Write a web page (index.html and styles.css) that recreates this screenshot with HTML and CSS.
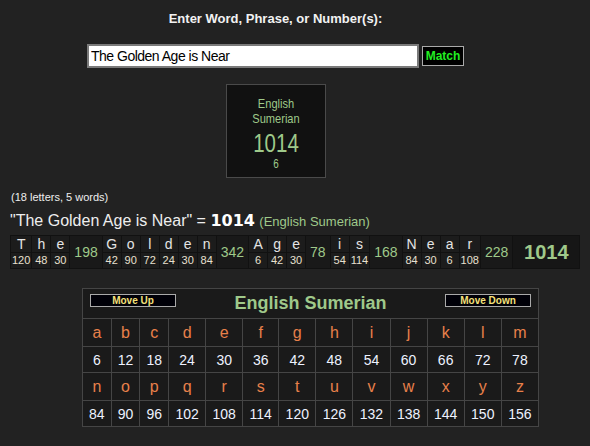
FILE: index.html
```html
<!DOCTYPE html>
<html lang="en">
<head>
    <meta charset="UTF-8">
    <title>Gematria Calculator</title>
    <link rel="stylesheet" href="styles.css">
</head>
<body>
    <div class="top">
        <h1>Enter Word, Phrase, or Number(s):</h1>
        <form class="search" onsubmit="return false">
            <input type="text" id="phrase" value="The Golden Age is Near">
            <button type="submit" class="match">Match</button>
        </form>
        <div class="result-box">
            <div class="cipher-name">English<br>Sumerian</div>
            <div class="cipher-value" id="boxValue">1014</div>
            <div class="cipher-reduced" id="boxReduced">6</div>
        </div>
    </div>

    <p class="counts" id="counts">(18 letters, 5 words)</p>
    <p class="summary">"<span id="phraseText">The Golden Age is Near</span>" = <b id="total">1014</b> <span class="cipher-label">(English Sumerian)</span></p>

    <table class="breakdown">
        <tr id="letterRow"></tr>
        <tr id="valueRow"></tr>
    </table>

    <table class="cipher-grid">
        <tr>
            <td class="grid-head" colspan="13">
                <button class="move">Move Up</button>
                <span class="grid-title">English Sumerian</span>
                <button class="move">Move Down</button>
            </td>
        </tr>
        <tbody id="gridBody"></tbody>
    </table>

    <script>
        const value = ch => (ch.toLowerCase().charCodeAt(0) - 96) * 6;

        function buildBreakdown(phrase) {
            const letterRow = document.getElementById('letterRow');
            const valueRow = document.getElementById('valueRow');
            let total = 0;

            phrase.split(' ').forEach(word => {
                let sum = 0;
                for (const ch of word) {
                    const top = document.createElement('td');
                    top.className = 'ch';
                    top.textContent = ch;
                    letterRow.appendChild(top);

                    const bottom = document.createElement('td');
                    bottom.className = 'val';
                    bottom.textContent = value(ch);
                    valueRow.appendChild(bottom);
                    sum += value(ch);
                }
                const wordSum = document.createElement('td');
                wordSum.className = 'word-sum';
                wordSum.rowSpan = 2;
                wordSum.textContent = sum;
                letterRow.appendChild(wordSum);
                total += sum;
            });

            const totalCell = document.createElement('td');
            totalCell.className = 'grand-total';
            totalCell.rowSpan = 2;
            totalCell.textContent = total;
            letterRow.appendChild(totalCell);
        }

        function buildGrid() {
            const body = document.getElementById('gridBody');
            const alphabet = 'abcdefghijklmnopqrstuvwxyz';
            for (let start = 0; start < 26; start += 13) {
                const letters = document.createElement('tr');
                const numbers = document.createElement('tr');
                for (let i = start; i < start + 13; i++) {
                    const l = document.createElement('td');
                    l.className = 'g-letter';
                    l.textContent = alphabet[i];
                    letters.appendChild(l);

                    const n = document.createElement('td');
                    n.className = 'g-num';
                    n.textContent = (i + 1) * 6;
                    numbers.appendChild(n);
                }
                body.appendChild(letters);
                body.appendChild(numbers);
            }
        }

        buildBreakdown(document.getElementById('phrase').value);
        buildGrid();
    </script>
</body>
</html>
```

FILE: styles.css
```css
* {
    box-sizing: border-box;
}

body {
    margin: 0;
    background: #222;
    color: #eee;
    font-family: "Liberation Sans", Arial, sans-serif;
}

/* Search area */
.top {
    width: 551px;
    padding-top: 11px;
    text-align: center;
}

h1 {
    margin: 0;
    font-size: 13px;
    line-height: 16px;
    color: #f2f2f2;
}

.search {
    display: flex;
    justify-content: center;
    align-items: center;
    gap: 3px;
    margin-top: 17px;
}

#phrase {
    width: 332px;
    height: 24px;
    padding: 0 2px;
    border: 2px solid #7a7a7a;
    background: #fff;
    color: #000;
    font-family: "Liberation Sans", Arial, sans-serif;
    font-size: 14px;
    letter-spacing: -0.5px;
}

.match {
    width: 42px;
    height: 20px;
    padding: 0;
    background: #000;
    border: 1px solid #aaa;
    color: #22ee22;
    font-family: "Liberation Sans", Arial, sans-serif;
    font-size: 12px;
    font-weight: bold;
}

.result-box {
    width: 100px;
    height: 94px;
    margin: 16px auto 0;
    padding-top: 11px;
    background: #111;
    border: 1px solid #4a4a4a;
    color: #9fc98a;
}

.result-box div {
    transform: scaleX(0.82);
}

.cipher-name {
    font-size: 13.5px;
    line-height: 15px;
}

.cipher-value {
    margin-top: 3px;
    font-size: 25px;
    line-height: 28px;
}

.cipher-reduced {
    font-size: 12px;
    line-height: 14px;
}

/* Phrase summary */
.counts {
    margin: 13px 0 0 11px;
    font-size: 11px;
    line-height: 13px;
    color: #eee;
}

.summary {
    margin: 7px 0 0 10px;
    font-size: 16px;
    line-height: 20px;
    color: #eee;
}

.summary b {
    font-family: "DejaVu Sans", Verdana, sans-serif;
    font-size: 16px;
    color: #fff;
}

.cipher-label {
    font-size: 13px;
    color: #9fc98a;
}

/* Letter breakdown */
.breakdown {
    margin: 3px 0 0 10px;
    border-spacing: 1px;
    background: #111;
    text-align: center;
}

.breakdown td {
    padding: 0 1px;
    background: #1c1c1c;
}

.breakdown .ch {
    width: 18px;
    height: 16px;
    font-size: 14px;
    line-height: 16px;
    color: #e4e4e4;
}

.val {
    height: 15px;
    font-size: 11px;
    line-height: 15px;
    color: #e8e0d0;
}

.breakdown .word-sum {
    padding: 0 4px;
    background: #191919;
    font-size: 14px;
    color: #9fc98a;
}

.breakdown .grand-total {
    width: 66px;
    background: #161616;
    font-size: 20px;
    font-weight: bold;
    color: #9fc98a;
}

/* Cipher chart */
.cipher-grid {
    margin: 19px 0 0 82px;
    width: 457px;
    border-collapse: collapse;
    background: #1a1a1a;
    text-align: center;
}

.cipher-grid td {
    border: 1px solid #454545;
    padding: 0 5px;
}

.cipher-grid .grid-head {
    height: 30px;
    padding: 0 7px;
}

.grid-title {
    font-size: 18px;
    font-weight: bold;
    color: #9fc98a;
}

.move {
    float: left;
    width: 86px;
    height: 13px;
    margin-top: 1px;
    padding: 0;
    background: #000008;
    border: 1px solid #aaa;
    color: #f5e27a;
    font-family: "Liberation Sans", Arial, sans-serif;
    font-size: 10px;
    font-weight: bold;
    line-height: 11px;
}

.move + .grid-title + .move {
    float: right;
}

.g-letter {
    height: 28px;
    font-size: 16px;
    color: #e8804a;
}

.g-num {
    height: 26px;
    font-size: 14px;
    color: #eef2ff;
}
```
